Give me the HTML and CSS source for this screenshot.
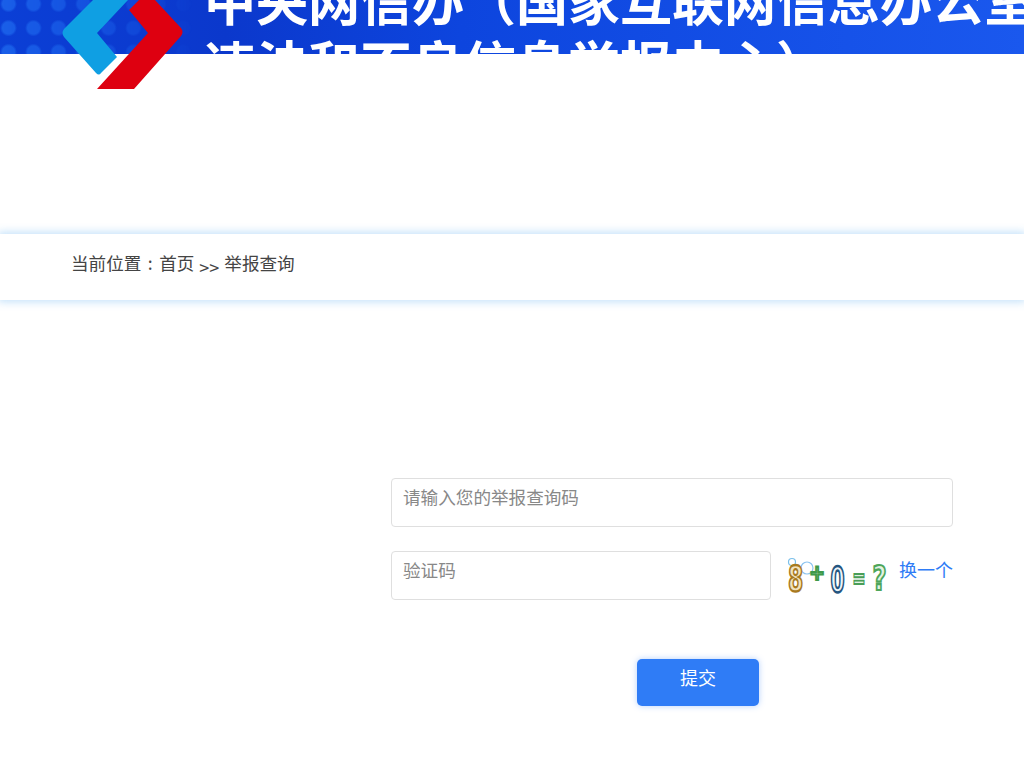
FILE: index.html
```html
<!DOCTYPE html>
<html lang="zh-CN">
<head>
<meta charset="utf-8">
<title>举报查询</title>
<link rel="stylesheet" href="styles.css">
</head>
<body>
<header class="banner">
  <div class="banner-clip">
    <div class="dots"></div>
    <h1 class="banner-title"><span class="title-line">中央网信办（国家互联网信息办公室）</span><span class="title-line">违法和不良信息举报中心）</span></h1>
  </div>
  <svg class="logo" width="130" height="95" viewBox="55 0 130 95" aria-hidden="true">
    <path d="M93 0 L64 29 Q61 33 64 37 L96 73 Q99 76 101 73 L117 57 L97 33 L128 0 Z" fill="#0f9fe3"/>
    <path d="M139 0 L129 10 L148 33 L97 89 L134 89 L181 36 Q184 32 181 28 L155 0 Z" fill="#de0010"/>
  </svg>
</header>
<nav class="crumbs">
  <span>当前位置 : 首页</span><span class="sep">&gt;&gt;</span><span>举报查询</span>
</nav>
<main class="form">
  <input class="field" type="text" placeholder="请输入您的举报查询码">
  <div class="code-row">
    <input class="field code-input" type="text" placeholder="验证码">
    <svg class="captcha" width="102" height="44" viewBox="0 0 102 44" aria-hidden="true">
      <circle cx="6" cy="6" r="3.500" fill="none" stroke="#7cc0ea" stroke-width="1.200"/>
      <circle cx="21" cy="12" r="6" fill="none" stroke="#8cc4f0" stroke-width="1.200"/>
      <text class="cap cap-8" text-anchor="middle" transform="translate(9.500 35) scale(0.78 1.250)">8</text>
      <text class="cap cap-plus" text-anchor="middle" transform="translate(31 24) scale(0.85 1)">+</text>
      <text class="cap cap-0" text-anchor="middle" transform="translate(51.500 36) scale(0.78 1.350)">0</text>
      <text class="cap cap-eq" text-anchor="middle" transform="translate(73 32) scale(0.8 1.400)">=</text>
      <text class="cap cap-q" text-anchor="middle" transform="translate(93.500 34) scale(0.9 1.250)">?</text>
    </svg>
    <a class="swap" href="#">换一个</a>
  </div>
  <div class="actions"><button class="submit" type="button">提交</button></div>
</main>
</body>
</html>
```
FILE: styles.css
```css
* { box-sizing: border-box; }
html, body { margin: 0; padding: 0; }
body {
  width: 1024px;
  height: 768px;
  overflow: hidden;
  background: #fff;
  color: #444;
  font-family: "Noto Sans CJK SC", "Liberation Sans", sans-serif;
}
.banner { position: relative; height: 54px; }
.banner-clip {
  position: relative;
  height: 54px;
  overflow: hidden;
  background: linear-gradient(90deg, #0b3fd6 0%, #0b38cc 22%, #0d45de 45%, #1a58ee 100%);
}
.dots {
  position: absolute;
  left: 0;
  top: 0;
  width: 200px;
  height: 54px;
  background-image: radial-gradient(circle, #1a5fe8 0, #1a5fe8 6px, transparent 8.500px);
  background-size: 25px 24px;
  background-position: -4px -8px;
  -webkit-mask-image: linear-gradient(90deg, #000 0, rgba(0, 0, 0, 0.45) 60%, transparent 100%);
  mask-image: linear-gradient(90deg, #000 0, rgba(0, 0, 0, 0.45) 60%, transparent 100%);
}
.banner-title {
  position: relative;
  margin: -33px 0 0 204px;
  color: #fff;
  font-size: 52px;
  font-weight: 700;
  line-height: 64px;
  white-space: nowrap;
}
.title-line { display: block; }
.logo { position: absolute; left: 55px; top: 0; }
.crumbs {
  display: flex;
  align-items: center;
  height: 66px;
  margin-top: 180px;
  padding: 0 0 10px 71px;
  background: #fff;
  box-shadow: 0 0 8px 2px rgba(64, 160, 240, 0.3);
  font-size: 17.6px;
  word-spacing: 2.5px;
  color: #444;
}
.sep { margin: 9px 5px 0 5px; font-size: 18px; }
.form {
  display: flex;
  flex-direction: column;
  width: 562px;
  margin: 178px 0 0 391px;
}
.field {
  display: block;
  width: 100%;
  height: 49px;
  padding: 0 11px 12px;
  border: 1px solid #dfdfdf;
  border-radius: 4px;
  background: #fff;
  font: inherit;
  font-size: 17.6px;
  outline: none;
}
.field::placeholder { color: #888; opacity: 1; }
.code-row {
  display: flex;
  align-items: flex-start;
  margin-top: 24px;
}
.code-input { width: 380px; flex: none; }
.captcha { flex: none; margin: 5px 0 0 15px; overflow: visible; }
.cap {
  font-family: "DejaVu Sans", sans-serif;
  font-weight: 700;
  stroke-width: 1.800;
}
.cap-8 { font-size: 28px; fill: #f2e4bd; stroke: #a87a1e; }
.cap-plus { font-size: 22px; fill: #e3f3e3; stroke: #3f9a4a; stroke-width: 2.200; }
.cap-0 { font-size: 26px; fill: #eef4f8; stroke: #24557f; }
.cap-eq { font-size: 20px; fill: #e3f3e3; stroke: #4a9e58; stroke-width: 1.300; }
.cap-q { font-size: 27px; fill: #e3f3e3; stroke: #4ea65a; }
.swap {
  margin: 3px 0 0 auto;
  color: #2f7cf6;
  font-size: 18px;
  line-height: 30px;
  text-decoration: none;
}
.actions { display: flex; margin: 59px 0 0 246px; }
.submit {
  width: 122px;
  height: 47px;
  padding: 0 0 12px;
  border: 0;
  border-radius: 5px;
  background: #2f7cf6;
  box-shadow: 0 0 6px rgba(47, 124, 246, 0.35);
  color: #fff;
  font: inherit;
  font-size: 18px;
}
```
